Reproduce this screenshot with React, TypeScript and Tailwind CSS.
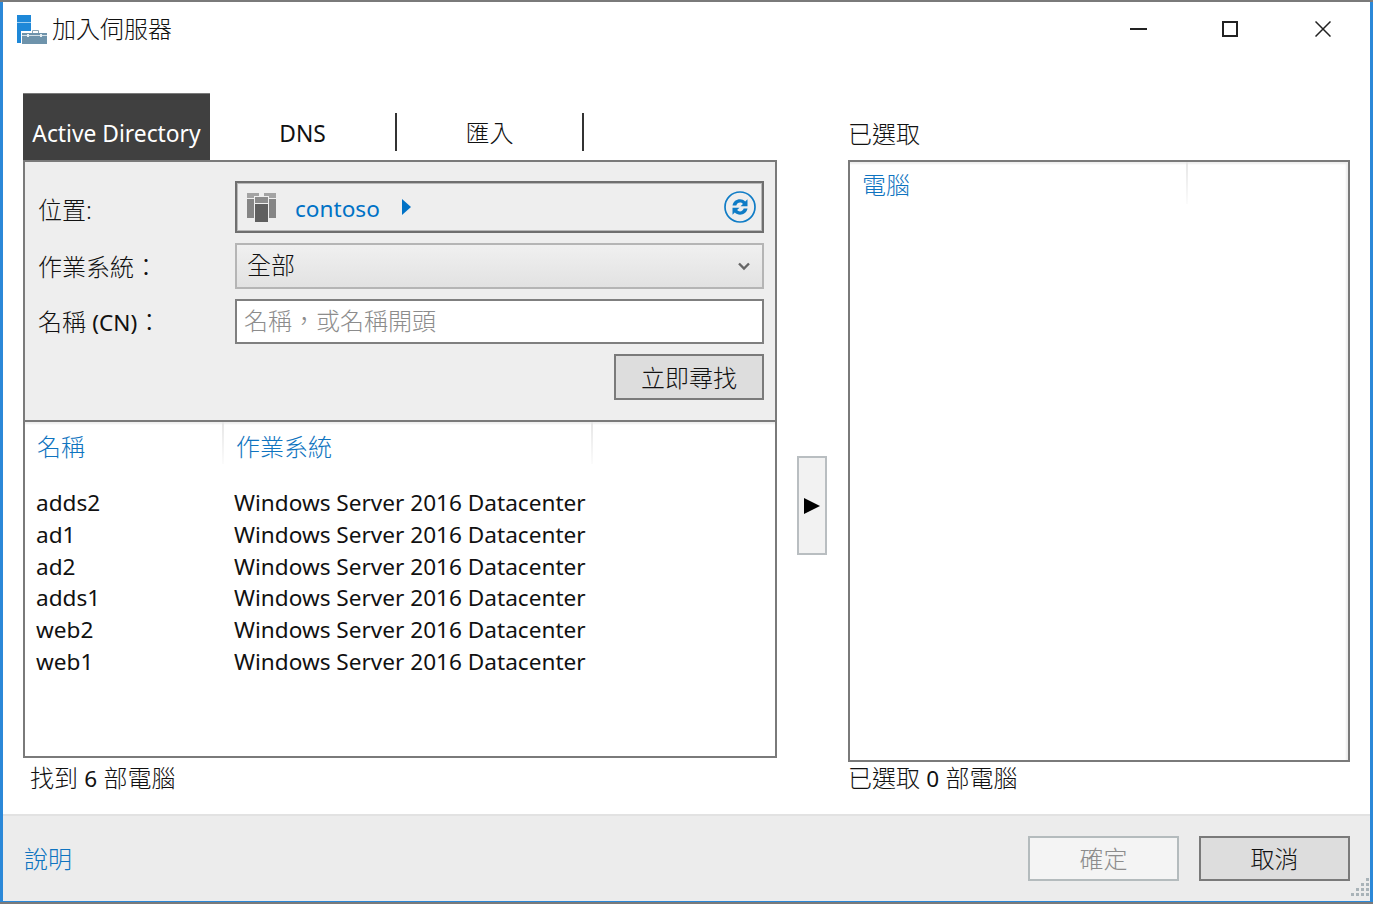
import React from 'react';

const rows: string[] = ['adds2', 'ad1', 'ad2', 'adds1', 'web2', 'web1'];

function ServerIcon() {
    return (
        <svg width="32" height="31" viewBox="0 0 32 31">
            <rect x="0" y="0" width="14" height="28" fill="#1e88d8" />
            <rect x="0" y="7" width="14" height="1" fill="#9fd0f2" />
            <rect x="4" y="16" width="27" height="14" fill="#ffffff" />
            <path d="M15.5 18v-2.5h6V18" fill="none" stroke="#8aa4b5" />
            <rect x="5" y="18" width="25" height="11" fill="#6e93ab" />
            <rect x="5" y="20" width="25" height="1" fill="#d5e1e8" />
            <rect x="10" y="19" width="2" height="3" fill="#e6eef2" />
            <rect x="23" y="19" width="2" height="3" fill="#e6eef2" />
        </svg>
    );
}

function DomainIcon() {
    return (
        <svg width="32" height="32" viewBox="0 0 32 32">
            <rect x="1" y="2" width="12" height="5" fill="#a3a3a3" />
            <rect x="18" y="2" width="12" height="5" fill="#a3a3a3" />
            <rect x="1" y="8" width="8" height="19" fill="#858585" />
            <rect x="22" y="8" width="8" height="19" fill="#858585" />
            <rect x="8" y="5" width="15" height="26" fill="#efefef" />
            <rect x="9" y="6" width="13" height="6" fill="#8c8c8c" />
            <rect x="9" y="13" width="13" height="18" fill="#5f5f5f" />
        </svg>
    );
}

function RefreshIcon() {
    return (
        <svg width="32" height="34" viewBox="0 0 32 34" fill="none">
            <circle cx="16" cy="17" r="15" stroke="#0f7cc6" strokeWidth="1.7" />
            <path d="M8.5 15.5c.8-4 3.8-6.2 7.4-6.2 2.2 0 3.9.8 5.3 2.2l2.3-2.2v7h-7l2.4-2.4c-.8-.8-1.7-1.3-2.9-1.3-1.8 0-3.1 1.1-3.7 2.9z" fill="#0f7cc6" />
            <path d="M23.5 18.5c-.8 4-3.8 6.2-7.4 6.2-2.2 0-3.9-.8-5.3-2.2l-2.3 2.2v-7h7l-2.4 2.4c.8.8 1.7 1.3 2.9 1.3 1.8 0 3.1-1.1 3.7-2.9z" fill="#0f7cc6" />
        </svg>
    );
}

function HeaderCell({ label, width, leading }: { label: string; width: string; leading: string }) {
    return (
        <div className={`${width} h-[42px] flex text-[#0f74c0]`}>
            <div className={`flex-1 pl-[12px] font-light ${leading}`}>{label}</div>
            <div className="w-[2px] h-full bg-gradient-to-b from-[#e6e6e6] to-[#fbfbfb]" />
        </div>
    );
}

function GripIcon() {
    return (
        <svg width="24" height="24" viewBox="0 0 24 24" className="absolute right-[0px] bottom-[1px]">
            {[[20, 2], [15, 7], [20, 7], [10, 12], [15, 12], [20, 12], [5, 17], [10, 17], [15, 17], [20, 17]].map(([x, y], index) => (
                <rect key={index} x={x} y={y} width="3" height="3" fill="#a9b3b8" />
            ))}
        </svg>
    );
}

export default function App() {
    return (
        <div className="w-[1373px] h-[904px] bg-[#7a7a7a] pt-[2px] pb-[2px] font-['Noto_Sans','Noto_Sans_CJK_TC',sans-serif] text-[24px] text-[#111111]">
            <div className="h-full flex flex-col bg-white border-x-[3px] border-b-[1px] border-[#2b88d8]">
                <div className="h-[91px] flex items-start">
                    <div className="flex items-center pl-[14px] pt-[13px] gap-[3px]">
                        <ServerIcon />
                        <span className="leading-[28px] -mt-[4px] font-light">加入伺服器</span>
                    </div>
                    <div className="ml-auto flex items-center pt-[19px] pr-[39px]">
                        <div className="w-[17px] h-[2px] bg-[#222222]" />
                        <div className="w-[16px] h-[16px] border-2 border-[#222222] ml-[75px]" />
                        <svg width="16" height="16" viewBox="0 0 16 16" className="ml-[77px]">
                            <path d="M0.5 0.5L15.5 15.5M15.5 0.5L0.5 15.5" stroke="#222222" strokeWidth="1.5" />
                        </svg>
                    </div>
                </div>

                <div className="flex pl-[20px] pr-[20px]">
                    <div className="w-[754px]">
                        <div className="h-[67px] flex items-end">
                            <div className="w-[187px] h-[67px] bg-[#404040] text-white text-center text-[22.8px] leading-[24px] pt-[28px] border-t border-[#7a7a7a]">Active Directory</div>
                            <div className="w-[187px] h-[38px] mb-[9px] border-r-2 border-[#333333] text-center text-[22.8px] leading-[42px]">DNS</div>
                            <div className="w-[187px] h-[38px] mb-[9px] border-r-2 border-[#333333] text-center leading-[40px] font-light">匯入</div>
                        </div>
                        <div className="h-[598px] border-2 border-[#7a7a7a] flex flex-col">
                            <div className="h-[260px] bg-[#eeeeee] border-b-2 border-[#7a7a7a] pt-[19px] pr-[11px]">
                                <div className="flex items-center h-[52px]">
                                    <div className="w-[210px] pl-[13px] pt-[6px] font-light">位置:</div>
                                    <div className="flex-1 h-[52px] border-2 border-[#6f6f6f] shadow-[inset_0_0_0_1px_#b8b8b8] flex items-center pl-[9px] pr-[6px]">
                                        <DomainIcon />
                                        <span className="ml-[17px] text-[#0072c6] text-[22.6px] pt-[4px]">contoso</span>
                                        <div className="ml-[22px] -mt-[1px] w-0 h-0 border-y-[8px] border-y-transparent border-l-[9px] border-l-[#0072c6]" />
                                        <div className="ml-auto"><RefreshIcon /></div>
                                    </div>
                                </div>
                                <div className="flex items-center h-[46px] mt-[10px]">
                                    <div className="w-[210px] pl-[13px] pt-[2px] font-light">作業系統：</div>
                                    <div className="flex-1 h-[46px] border-2 border-[#b5b5b5] bg-gradient-to-b from-[#f0f0f0] to-[#e2e2e2] flex items-center pl-[10px] pr-[12px]">
                                        <span className="-mt-[2px] font-light">全部</span>
                                        <svg width="12" height="9" viewBox="0 0 12 9" className="ml-auto">
                                            <path d="M1 1.5L6 6.5L11 1.5" fill="none" stroke="#666666" strokeWidth="2.4" />
                                        </svg>
                                    </div>
                                </div>
                                <div className="flex items-center h-[45px] mt-[10px]">
                                    <div className="w-[210px] pl-[13px] font-light">名稱 <span className="text-[22.6px] font-normal">(CN)</span>：</div>
                                    <div className="flex-1 h-[45px] border-2 border-[#7f7f7f] bg-white pl-[7px] text-[#8c8c8c] leading-[40px] font-light">名稱，或名稱開頭</div>
                                </div>
                                <div className="flex justify-end mt-[10px]">
                                    <div className="w-[150px] h-[46px] border-2 border-[#7a7a7a] bg-[#dddddd] text-center leading-[44px] font-light">立即尋找</div>
                                </div>
                            </div>
                            <div className="flex-1 bg-white shadow-[inset_0_3px_2px_-1px_#eeeeee]">
                                <div className="flex">
                                    <HeaderCell label="名稱" width="w-[199px]" leading="leading-[50px]" />
                                    <HeaderCell label="作業系統" width="w-[369px]" leading="leading-[50px]" />
                                </div>
                                <div className="pt-[23px] text-[22.6px]">
                                    {rows.map((row: string, index: number) => (
                                        <div className="flex h-[31.8px] leading-[31.8px] pl-[11px]" key={index}>
                                            <div className="w-[198px]">{row}</div>
                                            <div>Windows Server 2016 Datacenter</div>
                                        </div>
                                    ))}
                                </div>
                            </div>
                        </div>
                        <div className="pl-[7px] pt-[3px] leading-[34px] font-light">找到 <span className="font-normal text-[22.6px]">6</span> 部電腦</div>
                    </div>

                    <div className="w-[71px] pt-[363px] pl-[20px]">
                        <div className="w-[30px] h-[99px] border-2 border-[#b9bec1] bg-[#f2f2f2] flex items-center justify-center">
                            <div className="w-0 h-0 border-y-[8px] border-y-transparent border-l-[16px] border-l-black" />
                        </div>
                    </div>

                    <div className="w-[502px]">
                        <div className="h-[67px] leading-[82px] font-light">已選取</div>
                        <div className="h-[602px] border-2 border-[#7a7a7a] bg-white shadow-[inset_-3px_3px_2px_-1px_#eeeeee]">
                            <HeaderCell label="電腦" width="w-[338px]" leading="leading-[46px]" />
                        </div>
                        <div className="leading-[32px] font-light">已選取 <span className="font-normal text-[22.6px]">0</span> 部電腦</div>
                    </div>
                </div>

                <div className="mt-auto relative h-[87px] bg-[#ececec] border-t-2 border-[#e2e2e2] flex items-start pl-[21px] pr-[20px] pt-[20px]">
                    <span className="text-[#0f74c0] leading-[46px] font-light">說明</span>
                    <div className="ml-auto w-[151px] h-[45px] border-2 border-[#b4bbbd] bg-[#f4f4f4] text-[#8c8c8c] text-center leading-[42px] font-light">確定</div>
                    <div className="ml-[20px] w-[151px] h-[45px] border-2 border-[#7a7a7a] bg-[#dddddd] text-center leading-[42px] font-light">取消</div>
                    <GripIcon />
                </div>
            </div>
        </div>
    );
}
